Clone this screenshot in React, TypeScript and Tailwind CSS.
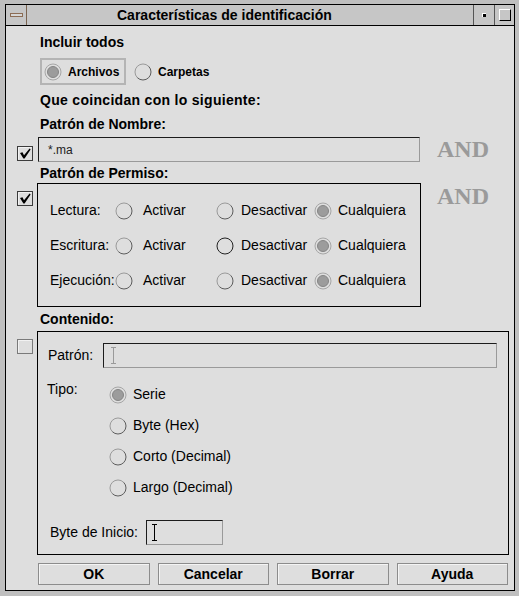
import React from 'react'

const Radio = ({ on = false, dark = false }: { on?: boolean; dark?: boolean }) => (
  <svg width="18" height="18" viewBox="0 0 18 18" className="shrink-0">
    {on ? (
      <>
        <circle cx="9" cy="9" r="8" fill="none" stroke="#a6a6a6" />
        <circle cx="9" cy="9" r="5.5" fill="#9c9c9c" stroke="#858585" />
      </>
    ) : (
      <>
        <path d="M3.34 14.66 A8 8 0 0 1 14.66 3.34" fill="none" stroke={dark ? '#222' : '#9a9a9a'} />
        <path d="M14.66 3.34 A8 8 0 0 1 3.34 14.66" fill="none" stroke={dark ? '#222' : '#5c5c5c'} />
      </>
    )}
  </svg>
)

const CheckBox = ({ on = false }: { on?: boolean }) => (
  <svg width="16" height="15" viewBox="0 0 16 15" className="block">
    <rect x="0.5" y="0.5" width="15" height="14" fill="none" stroke={on ? '#3c3c3c' : '#7a7a7a'} />
    <path d="M1.5 13.5 V1.5 H14.5" fill="none" stroke="#f2f2f2" />
    {on && <polygon points="3,7 5.5,6.3 7,9.3 12.6,2.6 13.6,3.6 7.6,12.6 6.4,12.6" fill="#000" />}
  </svg>
)

const IBeam = ({ color }: { color: string }) => (
  <svg width="5" height="17" viewBox="0 0 5 17" className="block">
    <path d="M0 0.5 H5 M2.5 0.5 V16.5 M0 16.5 H5" stroke={color} fill="none" />
  </svg>
)

const sunken = 'border-t border-l border-t-[#1c1c1c] border-l-[#1c1c1c] border-b border-r border-b-[#9a9a9a] border-r-[#9a9a9a]'

const permRows = [
  { label: 'Lectura:', darkDes: false },
  { label: 'Escritura:', darkDes: true },
  { label: 'Ejecución:', darkDes: false },
]

const tipos = [
  { label: 'Serie', on: true },
  { label: 'Byte (Hex)', on: false },
  { label: 'Corto (Decimal)', on: false },
  { label: 'Largo (Decimal)', on: false },
]

const And = ({ className }: { className: string }) => (
  <div className={`ml-[16px] font-['Liberation_Serif',serif] font-bold text-[24px] text-[#9a9a9a] ${className}`}>AND</div>
)

export default function App() {
  return (
    <div className="w-[519px] h-[596px] bg-[#bfbfbf] pt-[4px] pl-[5px] pr-[4px] pb-[5px] font-['Liberation_Sans',Arial,sans-serif] text-black">
      <div className="h-full flex flex-col border border-black">
        {/* title bar */}
        <div className="h-[21px] flex border-b border-black bg-[#c6c6c6]">
          <div className="w-[21px] border-r border-[#7a6350] flex items-center justify-center">
            <svg width="13" height="4" viewBox="0 0 13 4">
              <rect x="0.5" y="0.5" width="12" height="3" fill="#d6d6d6" stroke="#8c6c54" />
            </svg>
          </div>
          <div className="flex-1 pl-[90px] text-[14px] font-bold leading-[20px]">Características de identificación</div>
          <div className="w-[21px] border-l border-[#555] flex items-center justify-center">
            <div className="w-[4px] h-[4px] bg-black border-t border-l border-white" />
          </div>
          <div className="w-[20px] border-l border-[#555] flex items-center justify-center">
            <div className="w-[12px] h-[12px] border-t border-l border-white border-b border-r border-b-black border-r-black" />
          </div>
        </div>

        {/* body */}
        <div className="flex-1 flex flex-col bg-[#dedede]">
          <div className="mt-[6px] h-[20px] leading-[20px] pl-[34px] text-[14px] font-bold">Incluir todos</div>

          <div className="mt-[6px] pl-[34px] flex items-center">
            <div className="w-[86px] h-[27px] border-2 border-[#b4b4b4] flex items-center pl-[2px] gap-[6px]">
              <Radio on />
              <span className="text-[12px] font-bold">Archivos</span>
            </div>
            <div className="ml-[8px] flex items-center gap-[6px]">
              <Radio />
              <span className="text-[12px] font-bold">Carpetas</span>
            </div>
          </div>

          <div className="mt-[5px] h-[20px] leading-[20px] pl-[34px] text-[14px] font-bold tracking-[0.3px]">Que coincidan con lo siguiente:</div>
          <div className="mt-[4px] h-[20px] leading-[20px] pl-[34px] text-[14px] font-bold">Patrón de Nombre:</div>

          <div className="mt-[3px] h-[25px] flex">
            <div className="w-[31px] pl-[11px] pt-[9px]">
              <CheckBox on />
            </div>
            <div className="w-[384px] pl-[1px]">
              <div className={`w-[382px] h-[25px] ${sunken} flex items-center pl-[9px] text-[12px] text-[#222]`}>*.ma</div>
            </div>
            <And className="leading-[25px]" />
          </div>

          <div className="mt-[2px] h-[18px] leading-[18px] pl-[34px] text-[14px] font-bold">Patrón de Permiso:</div>

          <div className="mt-[1px] flex">
            <div className="w-[31px] pl-[11px] pt-[8px]">
              <CheckBox on />
            </div>
            <div className="w-[384px] h-[124px] border border-black pt-[9px] pl-[12px] text-[14px]">
              {permRows.map((r) => (
                <div key={r.label} className="h-[35px] flex items-center">
                  <div className="w-[65px]">{r.label}</div>
                  <div className="w-[101px] flex items-center gap-[10px]">
                    <Radio />
                    <span>Activar</span>
                  </div>
                  <div className="w-[98px] flex items-center gap-[7px]">
                    <Radio dark={r.darkDes} />
                    <span>Desactivar</span>
                  </div>
                  <div className="flex items-center gap-[6px]">
                    <Radio on />
                    <span>Cualquiera</span>
                  </div>
                </div>
              ))}
            </div>
            <And className="leading-[28px] mt-[-1px]" />
          </div>

          <div className="mt-[3px] h-[18px] leading-[18px] pl-[34px] text-[14px] font-bold">Contenido:</div>

          <div className="mt-[3px] flex">
            <div className="w-[31px] pl-[11px] pt-[8px]">
              <CheckBox />
            </div>
            <div className="w-[472px] h-[224px] border border-black flex flex-col text-[14px]">
              <div className="mt-[11px] h-[25px] flex items-center pl-[10px]">
                <div className="w-[55px]">Patrón:</div>
                <div className={`w-[394px] h-[25px] ${sunken} flex items-center pl-[7px]`}>
                  <IBeam color="#9a9a9a" />
                </div>
              </div>

              <div className="mt-[11px] flex pl-[9px]">
                <div className="w-[62px] leading-[20px]">Tipo:</div>
                <div className="flex flex-col">
                  {tipos.map((t) => (
                    <div key={t.label} className="h-[31px] flex items-center gap-[6px]">
                      <Radio on={t.on} />
                      <span>{t.label}</span>
                    </div>
                  ))}
                </div>
              </div>

              <div className="mt-[17px] h-[25px] flex items-center pl-[12px]">
                <div className="w-[96px]">Byte de Inicio:</div>
                <div className={`w-[77px] h-[25px] ${sunken} flex items-center pl-[5px]`}>
                  <IBeam color="#000" />
                </div>
              </div>
            </div>
          </div>

          <div className="mt-[8px] ml-[32px] w-[470px] h-[22px] grid grid-cols-4 gap-[8px]">
            {['OK', 'Cancelar', 'Borrar', 'Ayuda'].map((b) => (
              <button
                key={b}
                className="h-[22px] border border-[#8c8c8c] shadow-[inset_1px_1px_0_#f4f4f4] bg-[#dedede] text-[14px] font-bold leading-[20px] text-center"
              >
                {b}
              </button>
            ))}
          </div>
        </div>
      </div>
    </div>
  )
}
